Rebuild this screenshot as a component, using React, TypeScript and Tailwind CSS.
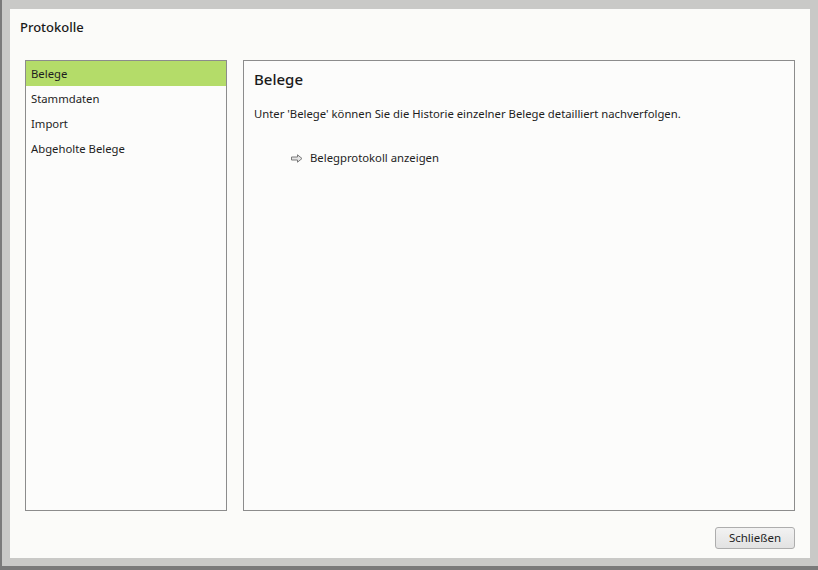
import React from "react";

const font = { fontFamily: '"Noto Sans", "Open Sans", Arial, sans-serif' };

export default function App() {
  const items = ["Belege", "Stammdaten", "Import", "Abgeholte Belege"];
  return (
    <div className="w-[818px] h-[570px] bg-[#7a7a7a] pl-[2px] pb-[4px] overflow-hidden" style={font}>
      <div className="w-full h-full bg-[#c9c9c7] pt-[9px] pl-[8px] pr-[8px] pb-[8px]">
        <div className="w-full h-full bg-[#fbfbf9] flex flex-col text-[#1e1e1e]">
          <div className="h-[51px] pl-[10px] pt-[9px] text-[13px] font-medium text-[#1a1a1a]">Protokolle</div>
          <div className="flex gap-[16px] px-[15px] h-[451px]">
            <div className="w-[202px] border border-[#8c8c8c] bg-[#fcfcfb] flex flex-col">
              {items.map((it, i) => (
                <div
                  key={it}
                  className={
                    "h-[25px] flex items-center pl-[5px] pt-[2px] text-[11.3px] " +
                    (i === 0 ? "bg-[#b4dc69]" : "")
                  }
                >
                  {it}
                </div>
              ))}
            </div>
            <div className="flex-1 border border-[#8c8c8c] bg-[#fcfcfb] pl-[10px] pt-[8px]">
              <div className="text-[15px] font-medium text-[#1a1a1a] leading-[20px]">Belege</div>
              <div className="mt-[17px] text-[11.3px] leading-[16px]">
                Unter 'Belege' können Sie die Historie einzelner Belege detailliert nachverfolgen.
              </div>
              <div className="mt-[28px] pl-[37px] flex items-center gap-[7px] text-[11.3px] leading-[16px]">
                <svg width="12" height="9" viewBox="0 0 12 9">
                  <path d="M0.5 3 H6.5 V0.8 L11 4.5 L6.5 8.2 V6 H0.5 Z" fill="#e4e4e4" stroke="#7a7a7a" strokeWidth="1" />
                </svg>
                <span>Belegprotokoll anzeigen</span>
              </div>
            </div>
          </div>
          <div className="flex-1 flex justify-end items-start pr-[15px] pt-[16px]">
            <button className="w-[80px] h-[22px] rounded-[3px] border border-[#adadad] bg-gradient-to-b from-[#f2f2f2] to-[#e2e2e2] text-[11.5px] text-[#1e1e1e] leading-none">
              Schließen
            </button>
          </div>
        </div>
      </div>
    </div>
  );
}
